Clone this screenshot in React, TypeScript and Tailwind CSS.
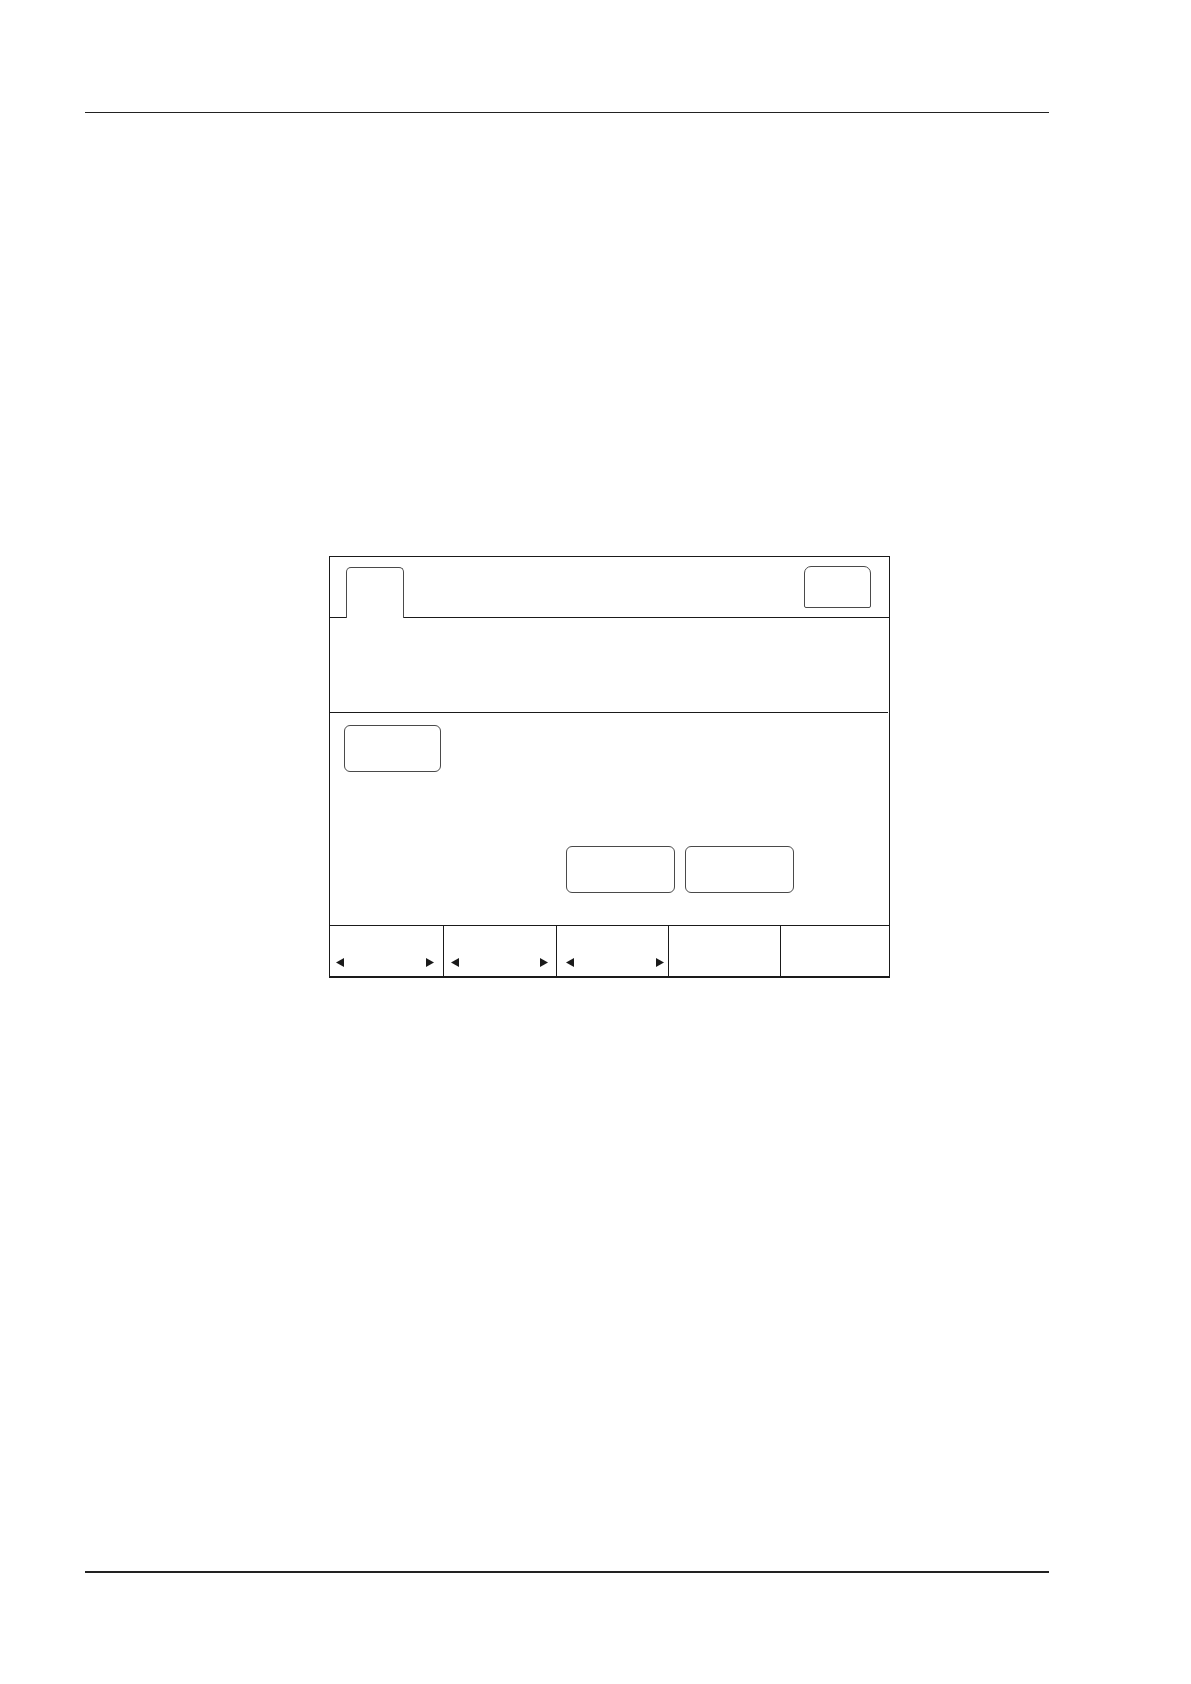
import React from "react";

function Arrow({ dir }: { dir: "left" | "right" }) {
  return (
    <svg width="8" height="9" viewBox="0 0 8 9" className="block">
      {dir === "left" ? (
        <polygon points="8,0 8,9 0,4.5" fill="#1a1a1a" />
      ) : (
        <polygon points="0,0 0,9 8,4.5" fill="#1a1a1a" />
      )}
    </svg>
  );
}

function SoftKey({ arrows, className }: { arrows?: boolean; className: string }) {
  return (
    <div className={`flex h-full items-end justify-between pb-[9px] ${className}`}>
      {arrows && (
        <>
          <Arrow dir="left" />
          <Arrow dir="right" />
        </>
      )}
    </div>
  );
}

export default function App() {
  return (
    <div className="min-h-[1684px] w-[1191px] bg-white font-['Liberation_Sans',sans-serif]">
      <div className="ml-[85px] w-[964px] pt-[112px]">
        <div className="h-px w-full bg-[#222]" />

        {/* screen panel */}
        <div className="ml-[244px] mt-[443px] w-[561px] border border-b-2 border-[#1a1a1a]">
          {/* header with tab */}
          <div className="flex h-[61px] items-stretch">
            <div className="w-[16px] border-b border-[#1a1a1a]" />
            <div className="mt-[10px] w-[58px] rounded-t-[5px] border border-b-0 border-[#4a4a4a]" />
            <div className="flex flex-1 justify-end border-b border-[#1a1a1a] pr-[18px] pt-[9px]">
              <div className="h-[42px] w-[67px] rounded-t-[7px] rounded-b-[2px] border border-[#4a4a4a]" />
            </div>
          </div>

          {/* info area */}
          <div className="mr-px h-[95px] border-b border-[#1a1a1a]" />

          {/* content area */}
          <div className="flex h-[212px] flex-col pl-[14px] pt-[12px]">
            <div className="h-[47px] w-[97px] rounded-[6px] border border-[#4a4a4a]" />
            <div className="ml-[222px] mt-[74px] flex gap-[10px]">
              <div className="h-[47px] w-[109px] rounded-[6px] border border-[#4a4a4a]" />
              <div className="h-[47px] w-[109px] rounded-[6px] border border-[#4a4a4a]" />
            </div>
          </div>

          {/* soft keys */}
          <div className="grid h-[51px] grid-cols-[114px_113px_112px_112px_1fr] border-t border-[#1a1a1a]">
            <SoftKey arrows className="border-r border-[#1a1a1a] pl-[6px] pr-[9px]" />
            <SoftKey arrows className="border-r border-[#1a1a1a] pl-[7px] pr-[8px]" />
            <SoftKey arrows className="border-r border-[#1a1a1a] pl-[9px] pr-[4px]" />
            <SoftKey className="border-r border-[#1a1a1a]" />
            <SoftKey className="" />
          </div>
        </div>

        <div className="mt-[593px] h-[2px] w-full bg-[#222]" />
      </div>
    </div>
  );
}
